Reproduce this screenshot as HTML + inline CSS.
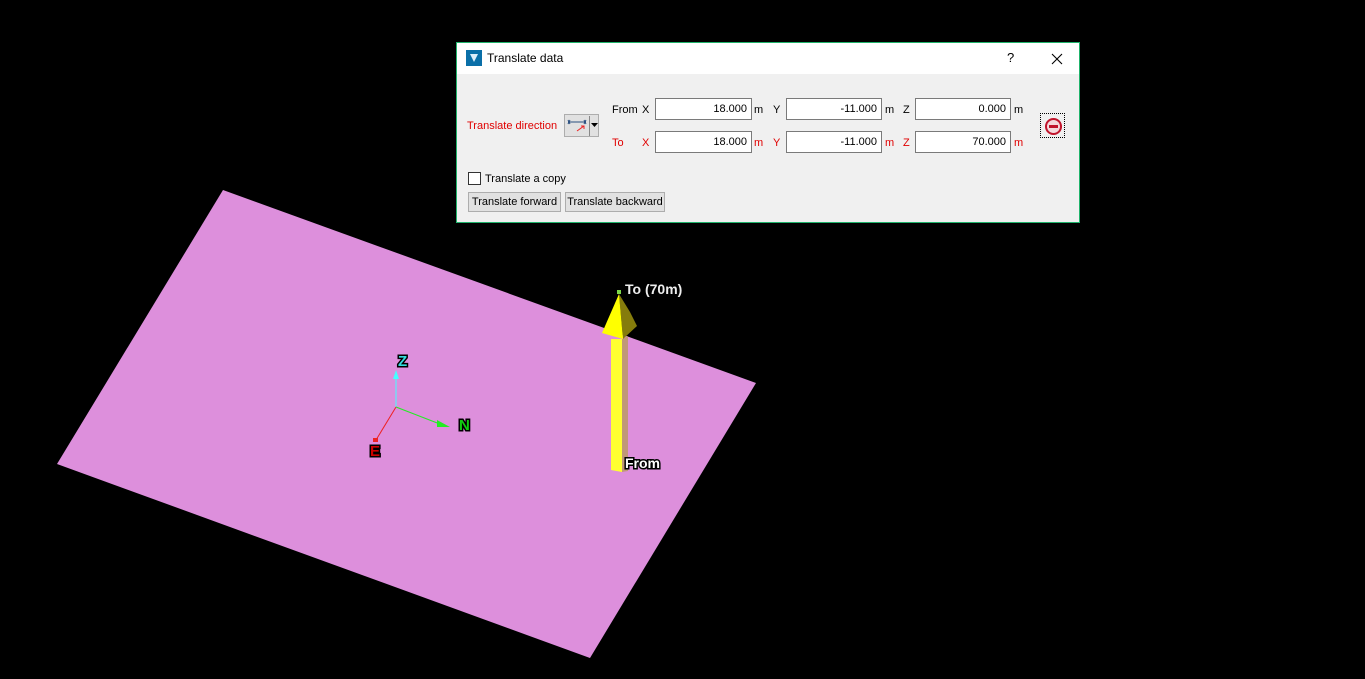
<!DOCTYPE html>
<html><head><meta charset="utf-8"><style>
html,body{margin:0;padding:0;background:#000;width:1365px;height:679px;overflow:hidden;font-family:"Liberation Sans",sans-serif;}
svg{position:absolute;left:0;top:0}
.dlg{position:absolute;left:456px;top:42px;width:622px;height:179px;border:1px solid #1fb36b;background:#f0f0f0;font-size:11px;color:#000}
.tb{position:absolute;left:0;top:0;width:622px;height:31px;background:#fff}
.t{position:absolute;white-space:nowrap}
.r{color:#e00000}
.box{position:absolute;border:1px solid #7a7a7a;background:#fff;text-align:right;line-height:20px;padding-right:4px;box-sizing:border-box;height:22px}
.btn{position:absolute;height:20px;border:1px solid #adadad;background:#e1e1e1;line-height:18px;text-align:center;box-sizing:border-box}
</style></head><body>
<svg width="1365" height="679">
<polygon points="223,190 756,383 590,658 57,464" fill="#dd8fdc"/>
<polygon points="611,339 622,339 622,472 611,470" fill="#ffff30"/>
<polygon points="622,339 628,336 628,471 622,472" fill="#c09878"/>
<polygon points="619,294 630,312 637,326 623,339" fill="#857c0c"/>
<polygon points="619,294 602,333 623,339" fill="#ffff00"/>
<rect x="617" y="290" width="4" height="4" fill="#7dd94a"/>
<line x1="396" y1="407" x2="396" y2="375" stroke="#4ff" stroke-width="1"/>
<polygon points="393,379 396,370 399,379" fill="#4ff"/>
<line x1="396" y1="407" x2="445" y2="426" stroke="#2e2" stroke-width="1"/>
<polygon points="437,420 450,427 437,427" fill="#2e2"/>
<line x1="396" y1="407" x2="376" y2="440" stroke="#e22" stroke-width="1"/>
<rect x="373" y="438" width="5" height="4" fill="#e22"/>
<g font-family="Liberation Sans" font-weight="bold" font-size="15" stroke="#000" stroke-width="3" paint-order="stroke">
<text x="398" y="366" fill="#3dd">Z</text>
<text x="459" y="430" fill="#1c1">N</text>
<text x="370" y="456" fill="#c00">E</text>
<text x="625" y="294" fill="#eee" font-size="14">To (70m)</text>
<text x="625" y="468" fill="#fff" font-size="14">From</text>
</g>
</svg>
<div class="dlg">
<div class="tb">
<div style="position:absolute;left:9px;top:7px;width:16px;height:16px;background:#0a6fa8"><div style="position:absolute;left:4px;top:4px;width:0;height:0;border-left:4px solid transparent;border-right:4px solid transparent;border-top:8px solid #ddeefa"></div></div>
<div class="t" style="left:30px;top:8px;font-size:12px">Translate data</div>
<div class="t" style="left:550px;top:7px;font-size:13px">?</div>
<svg width="12" height="12" style="left:594px;top:10px"><path d="M1 1L11 11M11 1L1 11" stroke="#000" stroke-width="1.1"/></svg>
</div>
<div class="t r" style="left:10px;top:77px">Translate direction</div>
<div style="position:absolute;left:107px;top:71px;width:35px;height:23px;border:1px solid #adadad;background:#e1e1e1;box-sizing:border-box">
<svg width="35" height="23" style="position:relative"><line x1="3" y1="7" x2="21" y2="7" stroke="#2a4f80"/><path d="M3 5l2 4M5 5l-2 4M19 5l2 4M21 5l-2 4" stroke="#2a4f80"/><line x1="12" y1="16" x2="19" y2="11" stroke="#e22"/><path d="M16 11h3v3" stroke="#e22" fill="none"/><line x1="24.5" y1="1" x2="24.5" y2="21" stroke="#888"/><polygon points="26,8 33,8 29.5,12" fill="#000"/></svg></div>
<div class="t" style="left:155px;top:61px">From</div><div class="t" style="left:185px;top:61px">X</div>
<div class="box" style="left:198px;top:55px;width:97px">18.000</div><div class="t" style="left:297px;top:61px">m</div>
<div class="t" style="left:316px;top:61px">Y</div>
<div class="box" style="left:329px;top:55px;width:96px">-11.000</div><div class="t" style="left:428px;top:61px">m</div>
<div class="t" style="left:446px;top:61px">Z</div>
<div class="box" style="left:458px;top:55px;width:96px">0.000</div><div class="t" style="left:557px;top:61px">m</div>
<div class="t r" style="left:155px;top:94px">To</div><div class="t r" style="left:185px;top:94px">X</div>
<div class="box" style="left:198px;top:88px;width:97px">18.000</div><div class="t r" style="left:297px;top:94px">m</div>
<div class="t r" style="left:316px;top:94px">Y</div>
<div class="box" style="left:329px;top:88px;width:96px">-11.000</div><div class="t r" style="left:428px;top:94px">m</div>
<div class="t r" style="left:446px;top:94px">Z</div>
<div class="box" style="left:458px;top:88px;width:96px">70.000</div><div class="t r" style="left:557px;top:94px">m</div>
<div style="position:absolute;left:583px;top:70px;width:25px;height:25px;border:1px dotted #000;box-sizing:border-box">
<div style="position:absolute;left:4px;top:4px;width:13px;height:13px;border-radius:50%;border:2px solid #c0142c;background:#f4d8dc"><div style="position:absolute;left:2px;top:5px;width:9px;height:3px;background:#c0142c"></div></div></div>
<div style="position:absolute;left:11px;top:129px;width:13px;height:13px;border:1px solid #333;background:#fff;box-sizing:border-box"></div>
<div class="t" style="left:28px;top:130px">Translate a copy</div>
<div class="btn" style="left:11px;top:149px;width:93px">Translate forward</div>
<div class="btn" style="left:108px;top:149px;width:100px">Translate backward</div>
</div>
</body></html>
